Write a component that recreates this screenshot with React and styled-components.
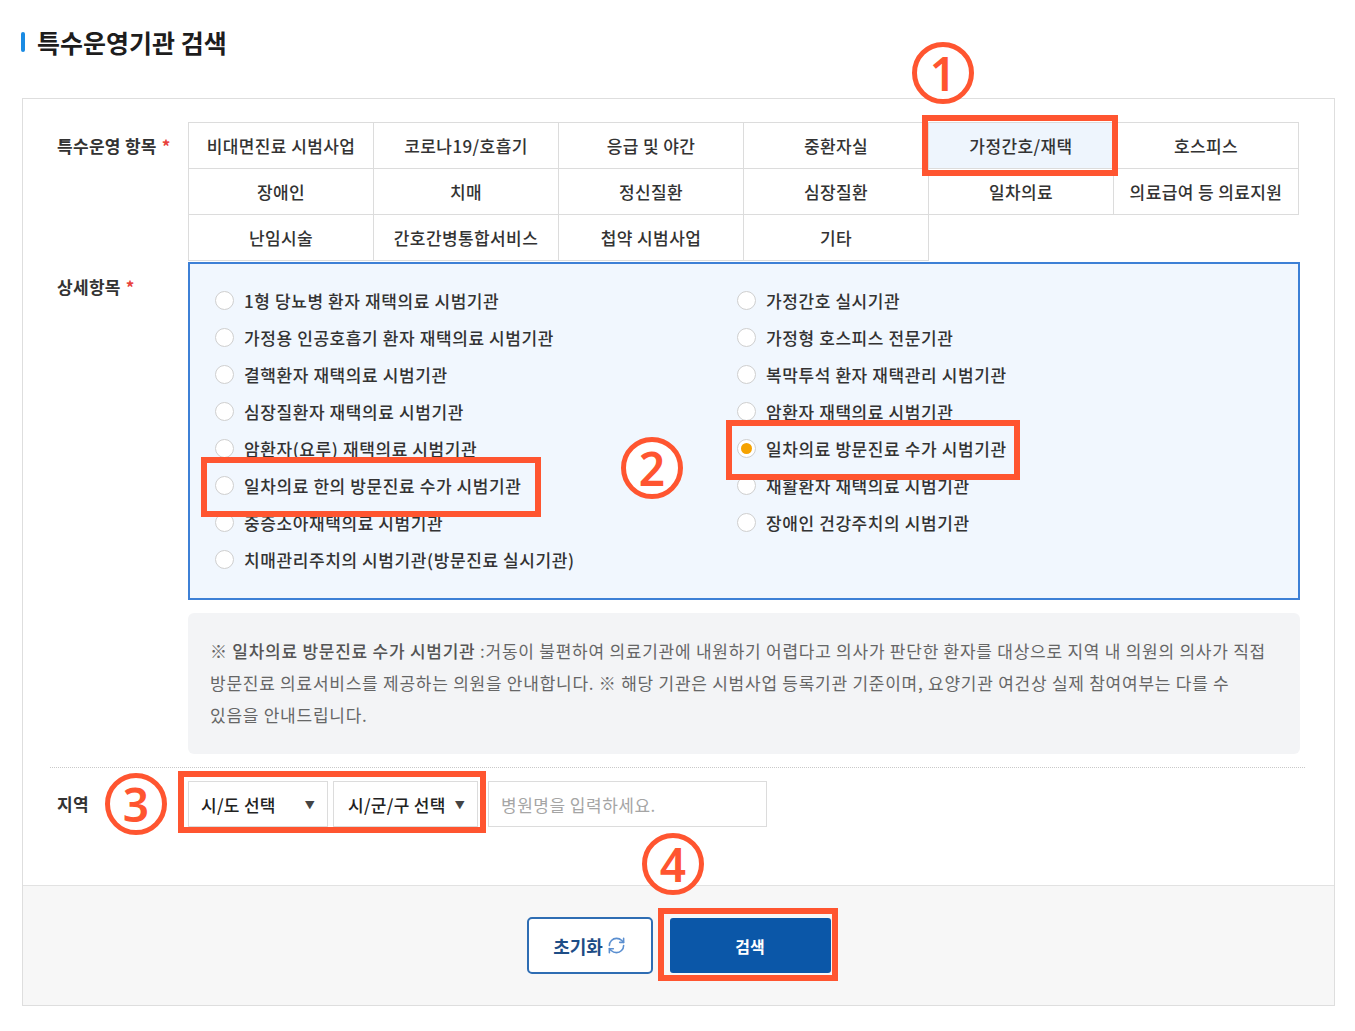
import React from 'react';
import styled, { createGlobalStyle } from 'styled-components';
import { RefreshCw } from 'lucide-react';

const GlobalStyle = createGlobalStyle`
  body {
    margin: 0;
    background: #ffffff;
    font-family: "Noto Sans CJK KR", "Noto Sans", sans-serif;
    color: #222;
  }
  * { box-sizing: border-box; }
`;

const categories = [
  '비대면진료 시범사업', '코로나19/호흡기', '응급 및 야간', '중환자실', '가정간호/재택', '호스피스',
  '장애인', '치매', '정신질환', '심장질환', '일차의료', '의료급여 등 의료지원',
  '난임시술', '간호간병통합서비스', '첩약 시범사업', '기타',
];

const leftItems = [
  '1형 당뇨병 환자 재택의료 시범기관',
  '가정용 인공호흡기 환자 재택의료 시범기관',
  '결핵환자 재택의료 시범기관',
  '심장질환자 재택의료 시범기관',
  '암환자(요루) 재택의료 시범기관',
  '일차의료 한의 방문진료 수가 시범기관',
  '중증소아재택의료 시범기관',
  '치매관리주치의 시범기관(방문진료 실시기관)',
];

const rightItems = [
  '가정간호 실시기관',
  '가정형 호스피스 전문기관',
  '복막투석 환자 재택관리 시범기관',
  '암환자 재택의료 시범기관',
  '일차의료 방문진료 수가 시범기관',
  '재활환자 재택의료 시범기관',
  '장애인 건강주치의 시범기관',
];

const Page = styled.div`
  position: relative;
  width: 1355px;
  min-height: 1031px;
  padding: 27px 20px 23px 21px;
`;

const TitleRow = styled.div`
  display: flex;
  align-items: center;
  gap: 12px;
  height: 30px;
`;

const TitleBar = styled.span`
  width: 4px;
  height: 20px;
  border-radius: 2px;
  background: #1a8be3;
`;

const Title = styled.h2`
  margin: 0;
  font-size: 25px;
  font-weight: 700;
  color: #1d1d1d;
`;

const Panel = styled.section`
  margin: 41px 0 0 1px;
  width: 1313px;
  border: 1px solid #dedede;
`;

const PanelBody = styled.div`
  padding: 23px 0 58px 0;
`;

const FormRow = styled.div`
  display: grid;
  grid-template-columns: 165px 1112px;
  margin-top: ${(p) => p.$gap || 0}px;
`;

const Label = styled.div`
  padding: ${(p) => p.$top || 0}px 0 0 34px;
  font-size: 17px;
  font-weight: 700;
  color: #333;
  line-height: 24px;
  letter-spacing: 0.3px;
  display: flex;
  align-items: ${(p) => (p.$center ? 'center' : 'flex-start')};

  em {
    font-style: normal;
    color: #e8413a;
    margin-left: 5px;
  }
`;

const CategoryGrid = styled.div`
  display: grid;
  grid-template-columns: repeat(6, 1fr);
  border-top: 1px solid #dcdcdc;
  border-left: 1px solid #dcdcdc;
  width: 1111px;
`;

const Cell = styled.div`
  height: 46px;
  display: flex;
  align-items: center;
  justify-content: center;
  border-right: 1px solid #dcdcdc;
  border-bottom: 1px solid #dcdcdc;
  background: ${(p) => (p.$active ? '#eef5fd' : '#fff')};
  font-size: 17px;
  font-weight: 500;
  color: #333;
  letter-spacing: 0.4px;
`;

const DetailBox = styled.div`
  margin-top: 1px;
  border: 2px solid #3d80d6;
  background: #f1f7fe;
  padding: 18px 0 20px 25px;
  display: grid;
  grid-template-columns: 522px 1fr;
`;

const RadioList = styled.div`
  display: flex;
  flex-direction: column;
`;

const RadioItem = styled.label`
  height: 37px;
  display: flex;
  align-items: center;
  gap: 10px;
  font-size: 17px;
  font-weight: 500;
  color: #333;
  letter-spacing: 0.6px;
`;

const Radio = styled.span`
  width: 19px;
  height: 19px;
  border-radius: 50%;
  border: 1px solid #cfcfcf;
  background: #fff;
  display: flex;
  align-items: center;
  justify-content: center;
  flex-shrink: 0;

  &::after {
    content: '';
    width: 11px;
    height: 11px;
    border-radius: 50%;
    background: ${(p) => (p.$checked ? '#f5a200' : 'transparent')};
  }
`;

const InfoBox = styled.div`
  grid-column: 2;
  background: #f3f4f6;
  border-radius: 6px;
  padding: 22px 6px 23px 22px;
  font-size: 17px;
  line-height: 32px;
  color: #666;
  letter-spacing: 0.75px;

  strong {
    font-weight: 500;
    color: #555;
  }
`;

const Divider = styled.hr`
  margin: 13px 29px 0 27px;
  border: none;
  border-top: 1px dotted #c9c9c9;
`;

const Controls = styled.div`
  display: flex;
  align-items: center;
  height: 46px;
`;

const SelectBox = styled.div`
  width: ${(p) => p.$w}px;
  height: 46px;
  margin-right: ${(p) => p.$mr || 0}px;
  border: 1px solid #dcdcdc;
  background: #fff;
  display: flex;
  align-items: center;
  justify-content: space-between;
  padding: 0 12px 0 ${(p) => p.$pl || 12}px;
  font-size: 17px;
  font-weight: 500;
  color: #222;
  letter-spacing: 0.3px;

  span.arrow {
    font-size: 10px;
    color: #444;
  }
`;

const SearchInput = styled.input`
  width: 279px;
  height: 46px;
  border: 1px solid #dcdcdc;
  padding: 0 12px;
  font-family: inherit;
  font-size: 17px;
  letter-spacing: 0.5px;
  outline: none;

  &::placeholder {
    color: #a5a5a5;
  }
`;

const Footer = styled.div`
  height: 120px;
  border-top: 1px solid #e2e2e2;
  background: #f7f7f7;
  display: flex;
  align-items: center;
  justify-content: center;
  gap: 17px;
`;

const ResetButton = styled.button`
  width: 126px;
  height: 57px;
  border: 2px solid #2e6db3;
  border-radius: 5px;
  background: #fff;
  display: flex;
  align-items: center;
  justify-content: center;
  gap: 4px;
  font-family: inherit;
  font-size: 18px;
  font-weight: 700;
  color: #1e4d86;
`;

const SearchButton = styled.button`
  width: 161px;
  height: 55px;
  border: none;
  border-radius: 3px;
  background: #0b57a8;
  color: #fff;
  font-family: inherit;
  font-size: 16px;
  font-weight: 700;
`;

const Highlight = styled.div`
  position: absolute;
  left: ${(p) => p.$x}px;
  top: ${(p) => p.$y}px;
  width: ${(p) => p.$w}px;
  height: ${(p) => p.$h}px;
  border: 6px solid #ff5530;
  pointer-events: none;
`;

const Marker = styled.div`
  position: absolute;
  left: ${(p) => p.$x - 31}px;
  top: ${(p) => p.$y - 31}px;
  width: 62px;
  height: 62px;
  border: 5px solid #ff5530;
  border-radius: 50%;
  background: #fff;
  display: flex;
  align-items: center;
  justify-content: center;
  font-family: "Noto Sans", sans-serif;
  font-size: 46px;
  font-weight: 600;
  line-height: 1;
  color: #ff5530;
`;

const App = () => {
  return (
    <Page>
      <GlobalStyle />
      <TitleRow>
        <TitleBar />
        <Title>특수운영기관 검색</Title>
      </TitleRow>

      <Panel>
        <PanelBody>
          <FormRow>
            <Label $top={12}>특수운영 항목<em>*</em></Label>
            <CategoryGrid>
              {categories.map((c) => (
                <Cell key={c} $active={c === '가정간호/재택'}>{c}</Cell>
              ))}
            </CategoryGrid>
          </FormRow>

          <FormRow>
            <Label $top={14}>상세항목<em>*</em></Label>
            <DetailBox>
              <RadioList>
                {leftItems.map((t) => (
                  <RadioItem key={t}>
                    <Radio />
                    {t}
                  </RadioItem>
                ))}
              </RadioList>
              <RadioList>
                {rightItems.map((t) => (
                  <RadioItem key={t}>
                    <Radio $checked={t === '일차의료 방문진료 수가 시범기관'} />
                    {t}
                  </RadioItem>
                ))}
              </RadioList>
            </DetailBox>
          </FormRow>

          <FormRow $gap={13}>
            <InfoBox>
              ※ <strong>일차의료 방문진료 수가 시범기관</strong> :거동이 불편하여 의료기관에 내원하기 어렵다고 의사가 판단한 환자를 대상으로 지역 내 의원의 의사가 직접<br />
              방문진료 의료서비스를 제공하는 의원을 안내합니다. ※ 해당 기관은 시범사업 등록기관 기준이며, 요양기관 여건상 실제 참여여부는 다를 수<br />
              있음을 안내드립니다.
            </InfoBox>
          </FormRow>

          <Divider />

          <FormRow $gap={13}>
            <Label $center>지역</Label>
            <Controls>
              <SelectBox $w={140} $mr={5}>
                시/도 선택 <span className="arrow">▼</span>
              </SelectBox>
              <SelectBox $w={145} $mr={10} $pl={14}>
                시/군/구 선택 <span className="arrow">▼</span>
              </SelectBox>
              <SearchInput placeholder="병원명을 입력하세요." />
            </Controls>
          </FormRow>
        </PanelBody>

        <Footer>
          <ResetButton>
            초기화
            <RefreshCw size={19} color="#5b8fd0" strokeWidth={2} />
          </ResetButton>
          <SearchButton>검색</SearchButton>
        </Footer>
      </Panel>

      <Highlight $x={922} $y={115} $w={196} $h={61} />
      <Highlight $x={201} $y={457} $w={340} $h={60} />
      <Highlight $x={726} $y={420} $w={294} $h={60} />
      <Highlight $x={178} $y={771} $w={308} $h={62} />
      <Highlight $x={658} $y={908} $w={180} $h={73} />

      <Marker $x={943} $y={73}>1</Marker>
      <Marker $x={652} $y={468}>2</Marker>
      <Marker $x={136} $y={804}>3</Marker>
      <Marker $x={673} $y={864}>4</Marker>
    </Page>
  );
};

export default App;
